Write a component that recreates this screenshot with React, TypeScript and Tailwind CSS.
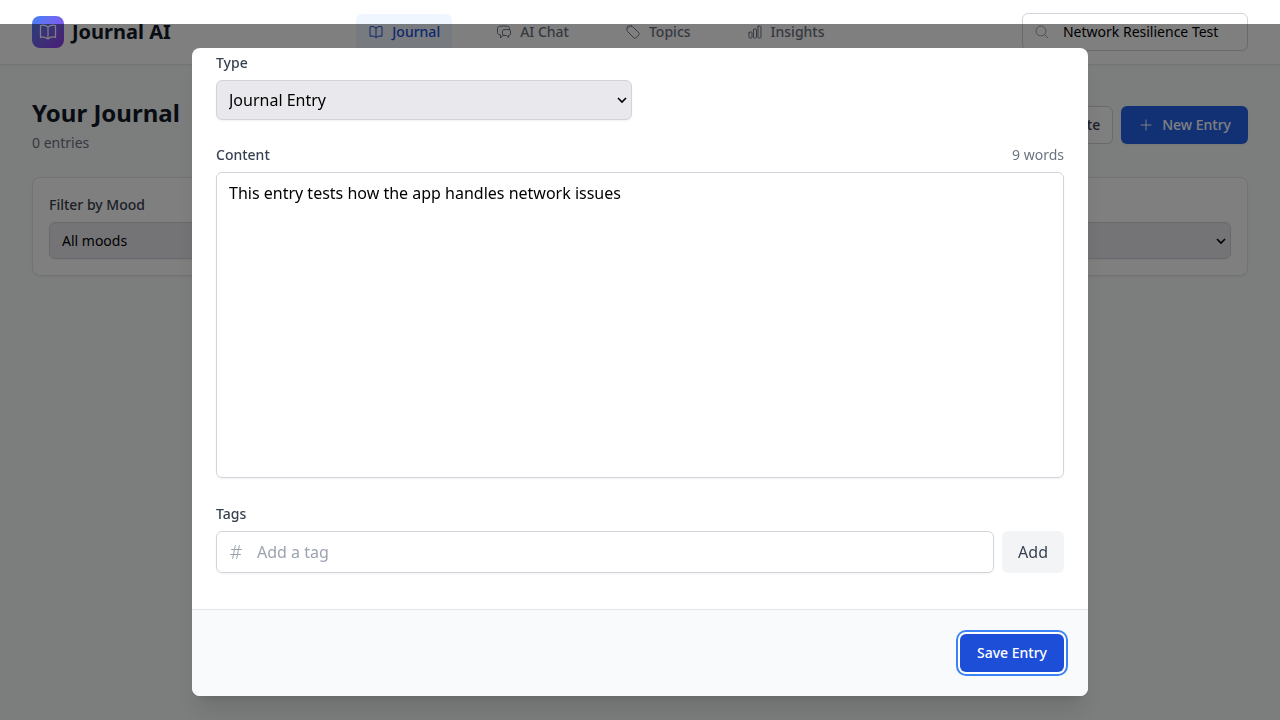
import { useState } from "react";
import type { ReactNode, SelectHTMLAttributes } from "react";
import {
  HiOutlineBookOpen,
  HiOutlineChartBar,
  HiOutlineChatBubbleLeftRight,
  HiOutlineHashtag,
  HiOutlineMagnifyingGlass,
  HiOutlinePlus,
  HiOutlineTag,
} from "react-icons/hi2";

function NavItem({ icon, label, active = false }: { icon: ReactNode; label: string; active?: boolean }) {
  return (
    <a
      href="#"
      className={`flex items-center gap-2 rounded-md px-3 py-2 text-sm font-medium ${
        active ? "bg-[#eff6ff] text-[#1d4ed8]" : "text-[#6b7280]"
      }`}
    >
      {icon}
      {label}
    </a>
  );
}

function FieldLabel({ htmlFor, children }: { htmlFor: string; children: ReactNode }) {
  return (
    <label htmlFor={htmlFor} className="block text-sm leading-[22px] font-medium text-[#374151]">
      {children}
    </label>
  );
}

function SelectBox({ className = "", children, ...rest }: SelectHTMLAttributes<HTMLSelectElement>) {
  return (
    <div className="relative">
      <select
        {...rest}
        className={`block w-full appearance-none rounded-md border border-[#d1d5db] bg-[#e9e9ed] pr-8 pl-3 text-black shadow-xs ${className}`}
      >
        {children}
      </select>
      <svg
        viewBox="0 0 10 10"
        className="pointer-events-none absolute inset-y-0 right-[5px] my-auto size-2.5"
        fill="none"
        stroke="black"
        strokeWidth="1.6"
        aria-hidden="true"
      >
        <path d="M1 3l4 4 4-4" />
      </svg>
    </div>
  );
}

function EntryDialog() {
  const [content, setContent] = useState("This entry tests how the app handles network issues");
  const words = content.split(/\s+/).filter(Boolean).length;

  return (
    <div className="fixed inset-0 top-6 flex items-center justify-center bg-black/50 p-4">
      <form
        role="dialog"
        aria-label="New entry"
        className="flex h-[90vh] w-full max-w-4xl flex-col overflow-hidden rounded-lg bg-white shadow-xl"
      >
        <div className="flex grow flex-col gap-6 overflow-hidden px-6 pt-1 pb-9">
          <div className="grid grid-cols-2 gap-4">
            <div className="flex flex-col gap-1.5">
              <FieldLabel htmlFor="type">Type</FieldLabel>
              <SelectBox id="type" className="h-10 text-base">
                <option>Journal Entry</option>
              </SelectBox>
            </div>
          </div>
          <div className="flex grow flex-col gap-1.5">
            <div className="flex items-center justify-between">
              <FieldLabel htmlFor="content">Content</FieldLabel>
              <span className="text-sm leading-[22px] text-[#6b7280]">{words} words</span>
            </div>
            <textarea
              id="content"
              rows={12}
              value={content}
              onChange={(e) => setContent(e.target.value)}
              className="block w-full resize-none rounded-md border border-[#d1d5db] px-3 py-2 text-base text-black shadow-xs"
            />
          </div>
          <div className="flex flex-col gap-1.5">
            <FieldLabel htmlFor="tag">Tags</FieldLabel>
            <div className="flex gap-2">
              <div className="relative flex-1">
                <HiOutlineHashtag className="absolute inset-y-0 left-3 my-auto size-4 text-[#9ca3af]" />
                <input
                  id="tag"
                  type="text"
                  placeholder="Add a tag"
                  className="block w-full rounded-md border border-[#d1d5db] py-2 pr-3 pl-10 text-base shadow-xs placeholder:text-[#9ca3af]"
                />
              </div>
              <button type="button" className="rounded-md bg-[#f3f4f6] px-4 text-base text-[#374151]">
                Add
              </button>
            </div>
          </div>
        </div>
        <div className="flex shrink-0 justify-end border-t border-[#e5e7eb] bg-[#f9fafb] p-6">
          <button
            type="button"
            className="rounded-md border border-transparent bg-[#1d4ed8] px-4 py-2 text-sm font-medium text-white ring-2 ring-[#3b82f6] ring-offset-2"
          >
            Save Entry
          </button>
        </div>
      </form>
    </div>
  );
}

export default function App() {
  return (
    <div className="min-h-screen bg-[#f9fafb] font-['Noto_Sans',sans-serif]">
      <header className="border-b border-[#e5e7eb] bg-white shadow-xs">
        <div className="flex h-16 items-center justify-between px-8">
          <div className="flex items-center gap-2">
            <div className="flex size-8 items-center justify-center rounded-lg bg-linear-to-br from-[#3b82f6] to-[#9333ea]">
              <HiOutlineBookOpen className="size-5 text-white" />
            </div>
            <span className="text-xl font-bold text-[#111827]">Journal AI</span>
          </div>
          <nav className="flex items-center gap-8">
            <NavItem active icon={<HiOutlineBookOpen className="size-4" />} label="Journal" />
            <NavItem icon={<HiOutlineChatBubbleLeftRight className="size-4" />} label="AI Chat" />
            <NavItem icon={<HiOutlineTag className="size-4" />} label="Topics" />
            <NavItem icon={<HiOutlineChartBar className="size-4" />} label="Insights" />
          </nav>
          <div className="relative">
            <HiOutlineMagnifyingGlass className="absolute inset-y-0 left-3 my-auto size-4 text-[#9ca3af]" />
            <input
              type="text"
              aria-label="Search entries"
              defaultValue="Network Resilience Test"
              className="block w-[226px] rounded-md border border-[#d1d5db] py-2 pr-4 pl-10 text-sm text-black"
            />
          </div>
        </div>
      </header>

      <main className="flex flex-col gap-6 px-8 py-8">
        <div className="flex items-center justify-between">
          <div>
            <h1 className="text-2xl font-bold text-[#111827]">Your Journal</h1>
            <p className="mt-1 text-sm text-[#6b7280]">0 entries</p>
          </div>
          <div className="flex gap-2">
            <button
              type="button"
              className="rounded-md border border-[#d1d5db] bg-white px-3 py-2 text-sm font-medium text-[#374151]"
            >
              Template
            </button>
            <button
              type="button"
              className="flex items-center gap-2 rounded-md border border-transparent bg-[#2563eb] px-4 py-2 text-sm font-medium text-white shadow-xs"
            >
              <HiOutlinePlus className="size-4" />
              New Entry
            </button>
          </div>
        </div>

        <section className="grid grid-cols-2 gap-4 rounded-lg border border-[#e5e7eb] bg-white p-4 shadow-xs">
          <div className="flex flex-col gap-1.5">
            <FieldLabel htmlFor="mood">Filter by Mood</FieldLabel>
            <SelectBox id="mood" className="h-[37px] text-sm">
              <option>All moods</option>
            </SelectBox>
          </div>
          <div className="flex flex-col gap-1.5">
            <FieldLabel htmlFor="sort">Sort by</FieldLabel>
            <SelectBox id="sort" className="h-[37px] text-sm">
              <option>Newest</option>
            </SelectBox>
          </div>
        </section>
      </main>

      <EntryDialog />
    </div>
  );
}
